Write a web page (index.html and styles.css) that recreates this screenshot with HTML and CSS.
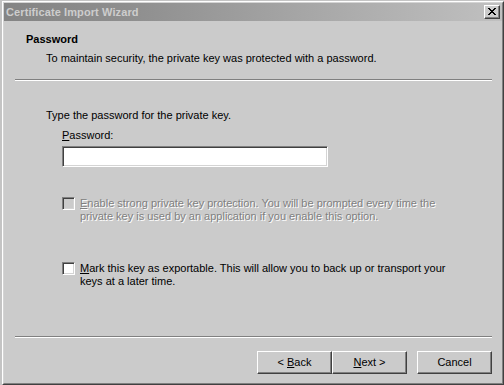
FILE: index.html
```html
<!DOCTYPE html>
<html>
<head>
<meta charset="utf-8">
<link rel="stylesheet" href="styles.css">
</head>
<body>
<div class="window">
  <div class="frame">
    <div class="titlebar">
      <span class="title">Certificate Import Wizard</span>
      <span class="close">
        <svg width="8" height="7" viewBox="0 0 8 7" shape-rendering="crispEdges">
          <rect x="0" y="0" width="2" height="1"/><rect x="6" y="0" width="2" height="1"/>
          <rect x="1" y="1" width="2" height="1"/><rect x="5" y="1" width="2" height="1"/>
          <rect x="2" y="2" width="4" height="1"/>
          <rect x="3" y="3" width="2" height="1"/>
          <rect x="2" y="4" width="4" height="1"/>
          <rect x="1" y="5" width="2" height="1"/><rect x="5" y="5" width="2" height="1"/>
          <rect x="0" y="6" width="2" height="1"/><rect x="6" y="6" width="2" height="1"/>
        </svg>
      </span>
    </div>
    <div class="body">
      <div class="header">
        <div class="h-title">Password</div>
        <div class="h-sub">To maintain security, the private key was protected with a password.</div>
      </div>
      <div class="sep"></div>
      <div class="content">
        <div class="prompt">Type the password for the private key.</div>
        <div class="label"><span class="ul">P</span>assword:</div>
        <div class="input"></div>
        <div class="check disabled">
          <span class="box"></span>
          <span class="check-text"><span class="ul">E</span>nable strong private key protection. You will be prompted every time the private key is used by an application if you enable this option.</span>
        </div>
        <div class="check second">
          <span class="box"></span>
          <span class="check-text"><span class="ul">M</span>ark this key as exportable. This will allow you to back up or transport your keys at a later time.</span>
        </div>
      </div>
      <div class="sep"></div>
      <div class="buttons">
        <span class="btn"><span>&lt; <span class="ul">B</span>ack</span></span>
        <span class="btn"><span><span class="ul">N</span>ext &gt;</span></span>
        <span class="btn cancel"><span>Cancel</span></span>
      </div>
    </div>
  </div>
</div>
</body>
</html>
```
FILE: styles.css
```css
html, body {
  margin: 0;
  padding: 0;
}
body {
  background: #c4c4c4;
  width: 504px;
  height: 385px;
  overflow: hidden;
  font-family: "Liberation Sans", Arial, sans-serif;
  font-size: 11px;
  line-height: 13px;
  color: #000;
}
.ul {
  text-decoration: underline;
}
.window {
  margin: 1px 0 0 2px;
  width: 502px;
  height: 384px;
  box-sizing: border-box;
  border: 1px solid;
  border-color: #ffffff #404040 #404040 #ffffff;
}
.frame {
  height: 100%;
  box-sizing: border-box;
  border: 1px solid;
  border-color: #d4d4d4 #808080 #808080 #d4d4d4;
  background: #cbcbcb;
  display: flex;
  flex-direction: column;
}
.titlebar {
  height: 18px;
  flex: none;
  display: flex;
  align-items: center;
  justify-content: space-between;
  padding: 0 2px 0 2px;
  background: linear-gradient(to right, #848484 0%, #8e8e8e 25%, #a6a6a6 60%, #c0c0c0 100%);
}
.title {
  font-weight: bold;
  color: #cdcdcd;
  font-size: 11px;
  letter-spacing: 0.1px;
}
.close {
  width: 16px;
  height: 14px;
  box-sizing: border-box;
  border: 1px solid;
  border-color: #ffffff #404040 #404040 #ffffff;
  box-shadow: inset -1px -1px 0 #808080;
  background: #cbcbcb;
  display: flex;
  align-items: center;
  justify-content: center;
  padding: 0 1px 1px 0;
}
.close svg {
  display: block;
  fill: #000;
}
.body {
  flex: 1;
  display: flex;
  flex-direction: column;
  padding: 0 10px 9px 11px;
}
.header {
  padding: 12px 0 14px 11px;
}
.h-title {
  font-weight: bold;
}
.h-sub {
  margin: 6px 0 0 20px;
}
.sep {
  height: 0;
  border-top: 1px solid #808080;
  border-bottom: 1px solid #ffffff;
  flex: none;
}
.content {
  flex: 1;
  padding: 28px 0 0 31px;
}
.label {
  margin: 7px 0 0 16px;
}
.input {
  margin: 4px 0 0 16px;
  width: 266px;
  height: 21px;
  box-sizing: border-box;
  background: #fff;
  border: 1px solid;
  border-color: #808080 #ffffff #ffffff #808080;
  box-shadow: inset 1px 1px 0 #404040, inset -1px -1px 0 #d4d4d4;
}
.check {
  display: flex;
  align-items: flex-start;
  margin-left: 16px;
}
.check.disabled {
  margin-top: 30px;
  color: #808080;
  text-shadow: 1px 1px 0 #ffffff;
}
.check.second {
  margin-top: 39px;
}
.box {
  flex: none;
  width: 13px;
  height: 13px;
  box-sizing: border-box;
  background: #fff;
  border: 1px solid;
  border-color: #808080 #ffffff #ffffff #808080;
  box-shadow: inset 1px 1px 0 #404040, inset -1px -1px 0 #d4d4d4;
  margin-right: 5px;
}
.disabled .box {
  background: #cbcbcb;
}
.check-text {
  width: 370px;
}
.buttons {
  display: flex;
  justify-content: flex-end;
  padding-top: 13px;
}
.btn {
  width: 75px;
  height: 23px;
  box-sizing: border-box;
  border: 1px solid;
  border-color: #ffffff #404040 #404040 #ffffff;
  box-shadow: inset -1px -1px 0 #808080;
  display: flex;
  align-items: center;
  justify-content: center;
  padding-bottom: 1px;
}
.cancel {
  margin-left: 10px;
}
```
